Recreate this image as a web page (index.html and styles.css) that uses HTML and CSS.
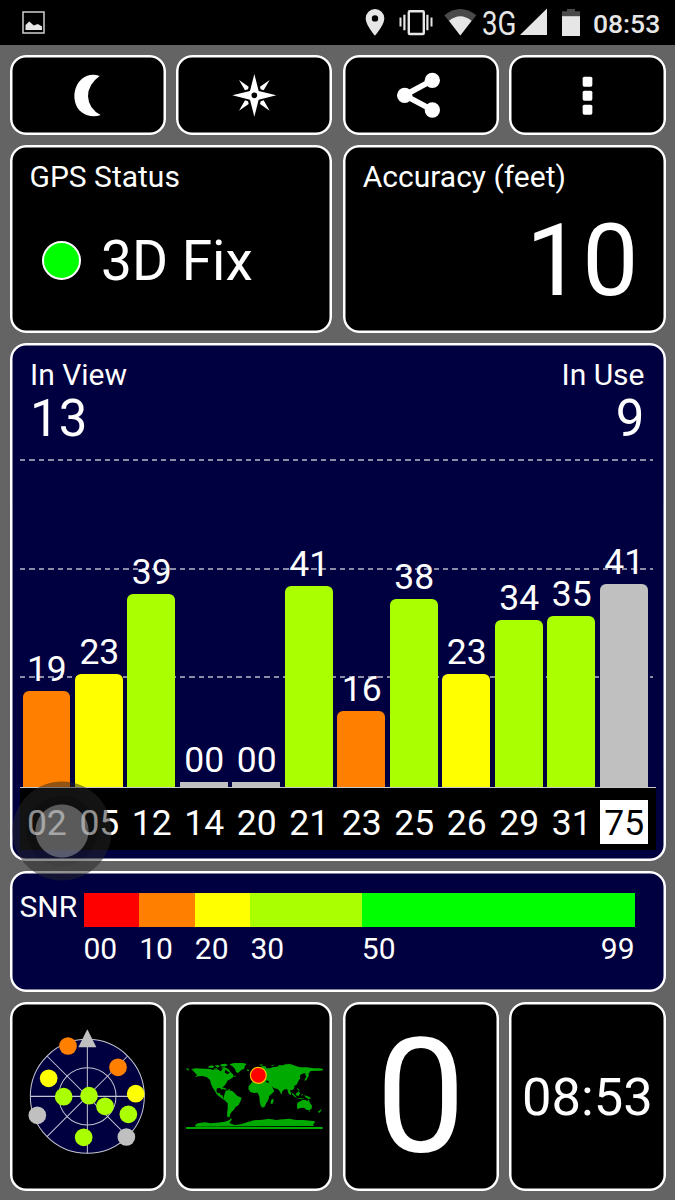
FILE: index.html
```html
<!DOCTYPE html>
<html lang="en">
<head>
<meta charset="UTF-8" />
<meta name="viewport" content="width=device-width, initial-scale=1.0" />
<title>GPS Status</title>
<link rel="stylesheet" href="styles.css">
</head>
<body>
<header class="statusbar">
    <svg class="picture" width="23" height="23" viewBox="0 0 23 23">
        <rect x="1" y="1" width="21" height="21" fill="none" stroke="#d0d0d0" stroke-width="1.5"/>
        <path d="M3.500 19v-5l3.800-3.500 4.500 4 4-1.500 4.200 2.500v3.500z" fill="#e6e6e6"/>
    </svg>
    <svg class="signals" width="220" height="45" viewBox="340 0 220 45">
        <path d="M375 9a9.300 9.300 0 0 0-9.300 9.300c0 7 9.300 17.400 9.300 17.400s9.300-10.400 9.300-17.400a9.300 9.300 0 0 0-9.300-9.300zm0 6.200a3.200 3.200 0 1 1 0 6.400 3.200 3.200 0 0 1 0-6.400z"/>
        <rect x="408.800" y="11.200" width="15" height="22.800" rx="1" fill="none" stroke="#e6e6e6" stroke-width="2.400"/>
        <path d="M403.300 14.700h2.200v15.600h-2.200zM399.500 17.500h2v9h-2zM426.300 14.700h2.200v15.600h-2.200zM430.500 17.500h2v9h-2z"/>
        <path d="M444.300 15.300q16-12.500 32 0l-16 20.200z" fill="#4a4a4a"/>
        <path d="M449 20.800q11.300-9 22.600 0l-11.300 14.700z"/>
        <text x="482" y="35" font-size="33" textLength="34.500" lengthAdjust="spacingAndGlyphs">3G</text>
        <path d="M547 8.500v26.500h-27z"/>
    </svg>
    <svg class="battery" width="18" height="27" viewBox="0 0 18 27">
        <path d="M0 8V2.200h5V0h8v2.200h5V8z" fill="#4a4a4a"/>
        <path d="M0 7.200h18V27H0z"/>
    </svg>
    <span class="clock">08:53</span>
</header>

<main class="screen">
    <div class="row buttons">
        <button class="panel">
            <svg width="156" height="80" viewBox="0 0 468 240">
                <path d="M269 63Q240 52 216 71C186 96 186 148 214 171Q242 191 272 180Q236 162 234 124Q234 88 269 63z"/>
            </svg>
        </button>
        <button class="panel">
            <svg width="156" height="80" viewBox="0 0 468 240">
                <path fill-rule="evenodd" d="M235 57L248 108 301 121 248 134 235 185 222 134 169 121 222 108zM235 112.500a8.500 8.500 0 1 0 0 17 8.500 8.500 0 0 0 0-17z"/>
                <path d="M189 75l29 20-2 8-9 3zM281 75l-29 20 2 8 9 3zM189 167l29-20-2-8-9-3zM281 167l-29-20 2-8 9-3z"/>
            </svg>
        </button>
        <button class="panel">
            <svg width="156" height="80" viewBox="0 0 468 240">
                <path d="M268 76L185 121 268 165" fill="none" stroke="#fff" stroke-width="17"/>
                <circle cx="268" cy="76" r="23"/>
                <circle cx="185" cy="121" r="23"/>
                <circle cx="268" cy="165" r="23"/>
            </svg>
        </button>
        <button class="panel">
            <svg width="156" height="80" viewBox="0 0 468 240">
                <rect x="221" y="65" width="29" height="30" rx="5"/>
                <rect x="221" y="107" width="29" height="30" rx="5"/>
                <rect x="221" y="149" width="29" height="30" rx="5"/>
            </svg>
        </button>
    </div>

    <div class="row info">
        <div class="panel">
            <div class="label">GPS Status</div>
            <div class="fix"><span class="lamp"></span>3D Fix</div>
        </div>
        <div class="panel">
            <div class="label">Accuracy (feet)</div>
            <div class="feet">10</div>
        </div>
    </div>

    <div class="panel blue satellites">
        <div class="counts">
            <div>
                <div class="label">In View</div>
                <div class="count">13</div>
            </div>
            <div class="right">
                <div class="label">In Use</div>
                <div class="count">9</div>
            </div>
        </div>
        <div class="chart">
            <div class="sat"><span>19</span><div class="bar orange" style="height: 95.5px"></div></div>
            <div class="sat"><span>23</span><div class="bar yellow" style="height: 112.5px"></div></div>
            <div class="sat"><span>39</span><div class="bar lime" style="height: 193px"></div></div>
            <div class="sat"><span>00</span><div class="bar none" style="height: 4.5px"></div></div>
            <div class="sat"><span>00</span><div class="bar none" style="height: 4.5px"></div></div>
            <div class="sat"><span>41</span><div class="bar lime" style="height: 200.5px"></div></div>
            <div class="sat"><span>16</span><div class="bar orange" style="height: 76px"></div></div>
            <div class="sat"><span>38</span><div class="bar lime" style="height: 187.5px"></div></div>
            <div class="sat"><span>23</span><div class="bar yellow" style="height: 112.5px"></div></div>
            <div class="sat"><span>34</span><div class="bar lime" style="height: 167px"></div></div>
            <div class="sat"><span>35</span><div class="bar lime" style="height: 170.5px"></div></div>
            <div class="sat"><span>41</span><div class="bar grey" style="height: 202.5px"></div></div>
        </div>
        <div class="ids">
            <span>02</span><span>05</span><span>12</span><span>14</span><span>20</span><span>21</span><span>23</span><span>25</span><span>26</span><span>29</span><span>31</span><span class="sbas">75</span>
        </div>
        <div class="touch"></div>
    </div>

    <div class="panel blue snr">
        <div class="snr-name">SNR</div>
        <div class="scale">
            <div class="step red"><span>00</span></div>
            <div class="step orange"><span>10</span></div>
            <div class="step yellow"><span>20</span></div>
            <div class="step lime"><span>30</span></div>
            <div class="step green last"><span>50</span><span>99</span></div>
        </div>
    </div>

    <div class="row tools">
        <div class="panel">
            <svg class="radar" width="116.700" height="116.700" viewBox="88 128 350 350">
                <g fill="none" stroke="#c4c4d4" stroke-width="3">
                    <circle cx="263" cy="303" r="171" fill="#000040"/>
                    <circle cx="263" cy="303" r="86"/>
                    <path d="M263 132v342M142 182l242 242M384 182L142 424"/>
                    <path d="M92 303h342" stroke-width="4"/>
                </g>
                <path d="M263 102l27 54h-54z" fill="#c0c0c0"/>
                <g fill="#ff8000"><circle cx="205" cy="152" r="26.500"/><circle cx="355" cy="216" r="26.500"/></g>
                <g fill="#ffff00"><circle cx="147" cy="249" r="26.500"/><circle cx="408" cy="295" r="26.500"/></g>
                <g fill="#aaff00"><circle cx="192" cy="304" r="26.500"/><circle cx="268" cy="301" r="26.500"/><circle cx="316" cy="333" r="26.500"/><circle cx="386" cy="357" r="26.500"/><circle cx="252" cy="426" r="26.500"/></g>
                <g fill="#c0c0c0"><circle cx="113" cy="360" r="26.500"/><circle cx="380" cy="425" r="26.500"/></g>
            </svg>
        </div>
        <div class="panel">
            <svg width="136.700" height="66" viewBox="46 72 410 198">
                <g fill="#00aa00">
                    <!-- north america, greenland -->
                    <path d="M62 90l14-2 42 2 10 3 12-2 10 6 8-9 6 5-2 8 10 5 6-8 9 8 2 7-9 7-10 5-3 8-6 7-5 5-3 8-5-6-9 1-2 8 4 7 8-2-1 6 7 2 3 9 6 2-4 3-9-7-12-9-7-12-6-9-5-11-3-12-9-8-14-4-13 1-9 3 6-7z"/>
                    <path d="M46 88l9 1-2 3 5 2-8 0zM112 83l10-4 9 3-5 5-12-1zM132 80l10-2 6 4-8 4zM128 89l10-1 2 3-10 1zM150 76l14-2 8 4-10 5-12-1zM150 86l12-1 12 6 6 9-8-2-8-6zM150 146l10 0 9 5-5 1-12-3zM172 150l7 1-3 3zM189 112l6-3-1 5z"/>
                    <path d="M176 76l14-4 28 0 10 3-6 7-1 7-9 4-10 9-6-3-3-9-8-8z"/>
                    <!-- south america -->
                    <path d="M165 155l9-2 12 4 8 7 5 6 14 6-4 12-6 11-8 5-6 9-7 7-4 7-1 8-7-1-1-12 2-12 0-17-10-10-2-9z"/>
                    <!-- europe and asia -->
                    <path d="M231 91l5 2-3 4-6-3zM264 88l12-7 8 1 3 6 10 0 11-4 12-1 4-4 12 0 20-5 22 8 10 3 20 0 22 3 17 0 10 2 0 4-10 1-27 1-7 9 0 10-7-2-3-11-11 4-5 5 2 7-6 8-4 10-8 5 0 7-6 5-7 1 3 9-1 6-7-6-3-12-8 0-7 6-3 10-5-10-6-7-11-2-7-6 5 9 3 6-8 7-7-1-5-9-3-9-11-2-4-9-6 1-8 3-8 0-1 4-9-2 0-9 8-2 2-12z"/>
                    <path d="M244 95l-6 10 3 6 7-4zM265 78l6-2 8 2-7 2zM300 80l12-4-6 5zM340 75l8-1-3 4z"/>
                    <!-- africa -->
                    <path d="M243 131l15-2 8 3 10 4 9-1 6 9 5 10 10 2-3 8-8 8-1 9-7 11-5 11-7 3-5-6-3-13-1-14-5-12-12 1-10-3-6-9 1-9z"/>
                    <path d="M302 182l6-3 1 6-4 11-6-3z"/>
                    <!-- asian islands, australia -->
                    <path d="M362 160l7 5 9 10-5 0-9-9zM375 164l9-7 4 5-4 9-8-2zM378 146l6 4 4 7-6-4zM376 176l14 2 12 1-12 2zM392 165l4 1-2 8zM400 169l10 2 12 7-9 2-9-6zM401 124l4-8 6-5 0 7-6 7zM410 108l6-2-3 6z"/>
                    <path d="M380 191l9-4 7-5 9 1 5 4 3-6 5 11 6 8-1 9-7 5-9-2-7-6-10 1-10 3-1-9zM413 215l5 0-2 4zM441 218l8-5 4-5-2 8-6 6z"/>
                    <!-- antarctica -->
                    <path d="M46 264h410v6H46zM75 263l-2-5 8-5 22-3 16 3 20-2 24-3 12-4 7-7 1 5-7 10 16 6 18-2 22-7 18-5 26-2 18-3 22 4 20-2 20-2 20 4 22 0 22 2 10 1 3 4-6 7 3 4z"/>
                </g>
                <path d="M240 117h9l-3 8-6 2zM285 125l8 0 2 6-9-1z" fill="#000"/>
                <circle cx="263" cy="109" r="24" fill="#ff0000" stroke="#ffc000" stroke-width="3.500"/>
            </svg>
        </div>
        <div class="panel speed">0</div>
        <div class="panel time">08:53</div>
    </div>
</main>
</body>
</html>
```

FILE: styles.css
```css
* {
    box-sizing: border-box;
}
body {
    margin: 0;
    width: 675px;
    height: 1200px;
    overflow: hidden;
    font-family: Roboto, sans-serif;
    background-color: #646464;
    color: #fff;
}
svg {
    display: block;
    fill: #fff;
    overflow: visible;
}
.statusbar {
    display: flex;
    align-items: center;
    height: 45px;
    padding: 0 16px 0 22px;
    background: #000;
    color: #e6e6e6;
}
.statusbar svg {
    fill: #e6e6e6;
}
.picture {
    margin-right: 295px;
}
.battery {
    margin: 0 13px 0 2px;
}
.clock {
    font-size: 26.5px;
    font-weight: 500;
    line-height: 45px;
    padding-top: 1px;
}
.screen {
    display: flex;
    flex-direction: column;
    gap: 10px;
    padding: 9.5px 9.5px 0;
}
.row {
    display: grid;
    gap: 10.5px;
}
.panel {
    background: #000;
    border: none;
    border-radius: 16px;
    box-shadow: inset 0 0 0 2.5px #fff;
}
.blue {
    background: #000040;
}
.buttons, .tools {
    grid-template-columns: repeat(4, minmax(0, 1fr));
}
.buttons {
    height: 80px;
}
.buttons .panel {
    display: flex;
    justify-content: center;
    align-items: center;
    padding: 0;
}
.label {
    font-size: 30px;
    line-height: 36px;
}
.info {
    grid-template-columns: 1fr 1fr;
    height: 188px;
}
.info .panel {
    padding: 14px 20px 0;
}
.fix {
    display: flex;
    align-items: center;
    gap: 20px;
    padding: 36px 0 0 12.5px;
    font-size: 55px;
    line-height: 61px;
}
.lamp {
    width: 39px;
    height: 39px;
    margin-top: -2px;
    border: 2px solid #fff;
    border-radius: 50%;
    background: #00ff00;
}
.feet {
    padding-right: 7px;
    font-size: 100px;
    line-height: 132px;
    text-align: right;
}
.satellites {
    position: relative;
    height: 518px;
    padding: 14px 10px 0;
}
.counts {
    display: flex;
    justify-content: space-between;
    height: 102px;
    padding: 0 11px 0 10.5px;
}
.count {
    font-size: 51px;
    line-height: 52px;
}
.right {
    text-align: right;
}
.chart {
    --dash: repeating-linear-gradient(90deg, #8c8ca6 0 5.4px, transparent 5.4px 9.4px);
    display: flex;
    align-items: flex-end;
    gap: 4.8px;
    height: 329px;
    padding-left: 3px;
    border-bottom: 1.5px solid #c8c8c8;
    background: var(--dash) 0 0 / 633px 2px no-repeat, var(--dash) 0 109px / 633px 2px no-repeat, var(--dash) 0 217px / 633px 2px no-repeat;
}
.sat {
    width: 47.7px;
    font-size: 35.5px;
    line-height: 44px;
    text-align: center;
}
.sat span {
    padding-left: 1px;
}
.bar {
    border-radius: 6px 6px 0 0;
}
.bar.none {
    border-radius: 0;
}
.red {
    background: #ff0000;
}
.orange {
    background: #ff8000;
}
.yellow {
    background: #ffff00;
}
.lime {
    background: #aaff00;
}
.green {
    background: #00ff00;
}
.grey, .none {
    background: #c0c0c0;
}
.ids {
    display: flex;
    align-items: center;
    gap: 4.8px;
    height: 62px;
    padding: 7px 0 0 3px;
    background: #000;
}
.ids span {
    width: 47.7px;
    padding: 2px 0 0 1px;
    font-size: 35.5px;
    line-height: 42px;
    text-align: center;
}
.ids .sbas {
    background: #fff;
    color: #000;
}
.touch {
    position: absolute;
    left: 2px;
    bottom: -20px;
    width: 100px;
    height: 100px;
    border-radius: 50%;
    background: radial-gradient(circle, rgba(128,128,128,0.7) 0 26px, rgba(30,30,30,0.5) 27px 35px, rgba(38,38,38,0.5) 36px 49px, transparent 50px);
}
.snr {
    display: flex;
    height: 121.5px;
    padding: 22px 31px 0 10px;
}
.snr-name {
    width: 64px;
    font-size: 30px;
    line-height: 27px;
}
.scale {
    display: grid;
    grid-template-columns: 10fr 10fr 10fr 20fr 49fr;
    flex: 1;
    height: 34px;
}
.step {
    display: flex;
    justify-content: space-between;
    height: 34px;
    font-size: 30px;
    line-height: 36px;
}
/* numbers sit under the colour strip */
.step span {
    padding-top: 38px;
}
.tools {
    height: 188.5px;
}
.tools .panel {
    display: flex;
    justify-content: center;
    align-items: center;
}
.tools .speed {
    padding-top: 2px;
    font-size: 160px;
    line-height: 1;
}
.tools .time {
    padding-top: 2px;
    font-size: 52.5px;
}
```
